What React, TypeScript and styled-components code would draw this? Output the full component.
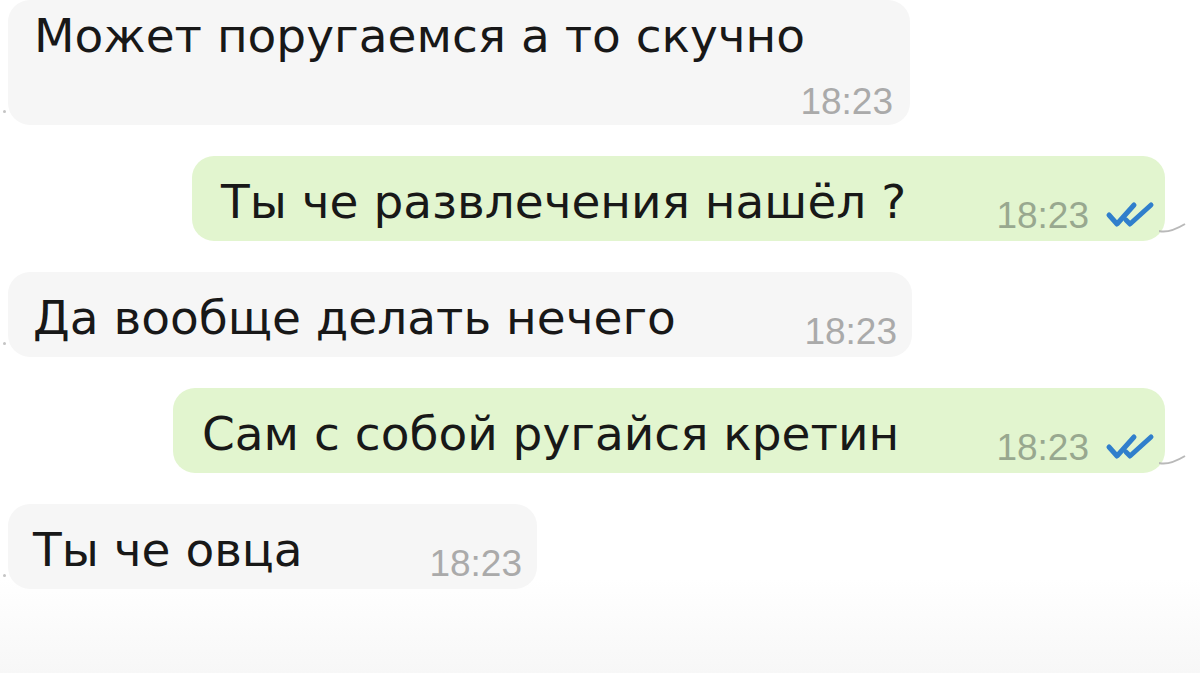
import styled, { createGlobalStyle } from "styled-components";

const GlobalStyle = createGlobalStyle`
  html, body {
    margin: 0;
    padding: 0;
    background: #ffffff;
  }
  body {
    width: 1200px;
    height: 673px;
    overflow: hidden;
    font-family: "DejaVu Sans", "Liberation Sans", sans-serif;
  }
`;

interface Message {
  text: string;
  time: string;
  out?: boolean;
  width: number;
  stacked?: boolean;
}

const messages: Message[] = [
  { text: "Может поругаемся а то скучно", time: "18:23", width: 902, stacked: true },
  { text: "Ты че развлечения нашёл ?", time: "18:23", out: true, width: 973 },
  { text: "Да вообще делать нечего", time: "18:23", width: 904 },
  { text: "Сам с собой ругайся кретин", time: "18:23", out: true, width: 992 },
  { text: "Ты че овца", time: "18:23", width: 529 },
];

function Checks() {
  return (
    <CheckIcon width="52" height="30" viewBox="0 0 52 30">
      <path d="M4 16 L12 25 L29 6" />
      <path d="M21 21 L25 25 L46 6" />
    </CheckIcon>
  );
}

function Tail({ out }: { out?: boolean }) {
  if (out) {
    return (
      <OutTail width="30" height="16" viewBox="0 0 30 16">
        <path d="M0 10 C8 12 16 9 26 3" />
      </OutTail>
    );
  }
  return <InTail />;
}

function Bubble({ message }: { message: Message }) {
  return (
    <BubbleStyle $out={message.out} $width={message.width} $stacked={message.stacked}>
      <Text>{message.text}</Text>
      <Meta $stacked={message.stacked}>
        <Time $out={message.out}>{message.time}</Time>
        {message.out && <Checks />}
      </Meta>
      <Tail out={message.out} />
    </BubbleStyle>
  );
}

export default function App() {
  return (
    <>
      <GlobalStyle />
      <Chat>
        {messages.map((m, i) => (
          <Bubble key={i} message={m} />
        ))}
      </Chat>
    </>
  );
}

const Chat = styled.div`
  display: flex;
  flex-direction: column;
  align-items: flex-start;
  gap: 31px;
  padding: 0 35px 0 8px;
  height: 673px;
  box-sizing: border-box;
  background: linear-gradient(#ffffff 86%, #f7f7f7);
`;

const BubbleStyle = styled.div<{ $out?: boolean; $width: number; $stacked?: boolean }>`
  position: relative;
  box-sizing: border-box;
  width: ${({ $width }) => $width}px;
  align-self: ${({ $out }) => ($out ? "flex-end" : "flex-start")};
  display: flex;
  flex-direction: ${({ $stacked }) => ($stacked ? "column" : "row")};
  align-items: ${({ $stacked }) => ($stacked ? "stretch" : "flex-end")};
  padding: ${({ $stacked, $out }) =>
    $stacked ? "8px 17px 3px 26px" : $out ? "18px 8px 11px 29px" : "18px 15px 11px 25px"};
  background: ${({ $out }) => ($out ? "#e2f5cf" : "#f6f6f6")};
  border-radius: 22px;
`;

const Text = styled.div`
  font-size: 47px;
  line-height: 56px;
  color: #181818;
  white-space: nowrap;
`;

const Meta = styled.div<{ $stacked?: boolean }>`
  display: flex;
  align-items: center;
  gap: 16px;
  margin-left: auto;
  margin-top: ${({ $stacked }) => ($stacked ? "18px" : "0")};
  margin-bottom: ${({ $stacked }) => ($stacked ? "0" : "-6px")};
`;

const Time = styled.span<{ $out?: boolean }>`
  font-family: "Liberation Sans", Arial, sans-serif;
  font-size: 37px;
  line-height: 40px;
  color: ${({ $out }) => ($out ? "#98a88f" : "#aaaaaa")};
`;

const CheckIcon = styled.svg`
  fill: none;
  stroke: #307fcc;
  stroke-width: 5;
  stroke-linecap: round;
  stroke-linejoin: round;
  margin-top: -4px;
`;

const OutTail = styled.svg`
  position: absolute;
  right: -24px;
  bottom: 4px;
  fill: none;
  stroke: #b9b9b9;
  stroke-width: 2;
`;

const InTail = styled.span`
  position: absolute;
  left: -5px;
  bottom: 12px;
  width: 3px;
  height: 3px;
  border-radius: 50%;
  background: #c4c4c4;
`;
